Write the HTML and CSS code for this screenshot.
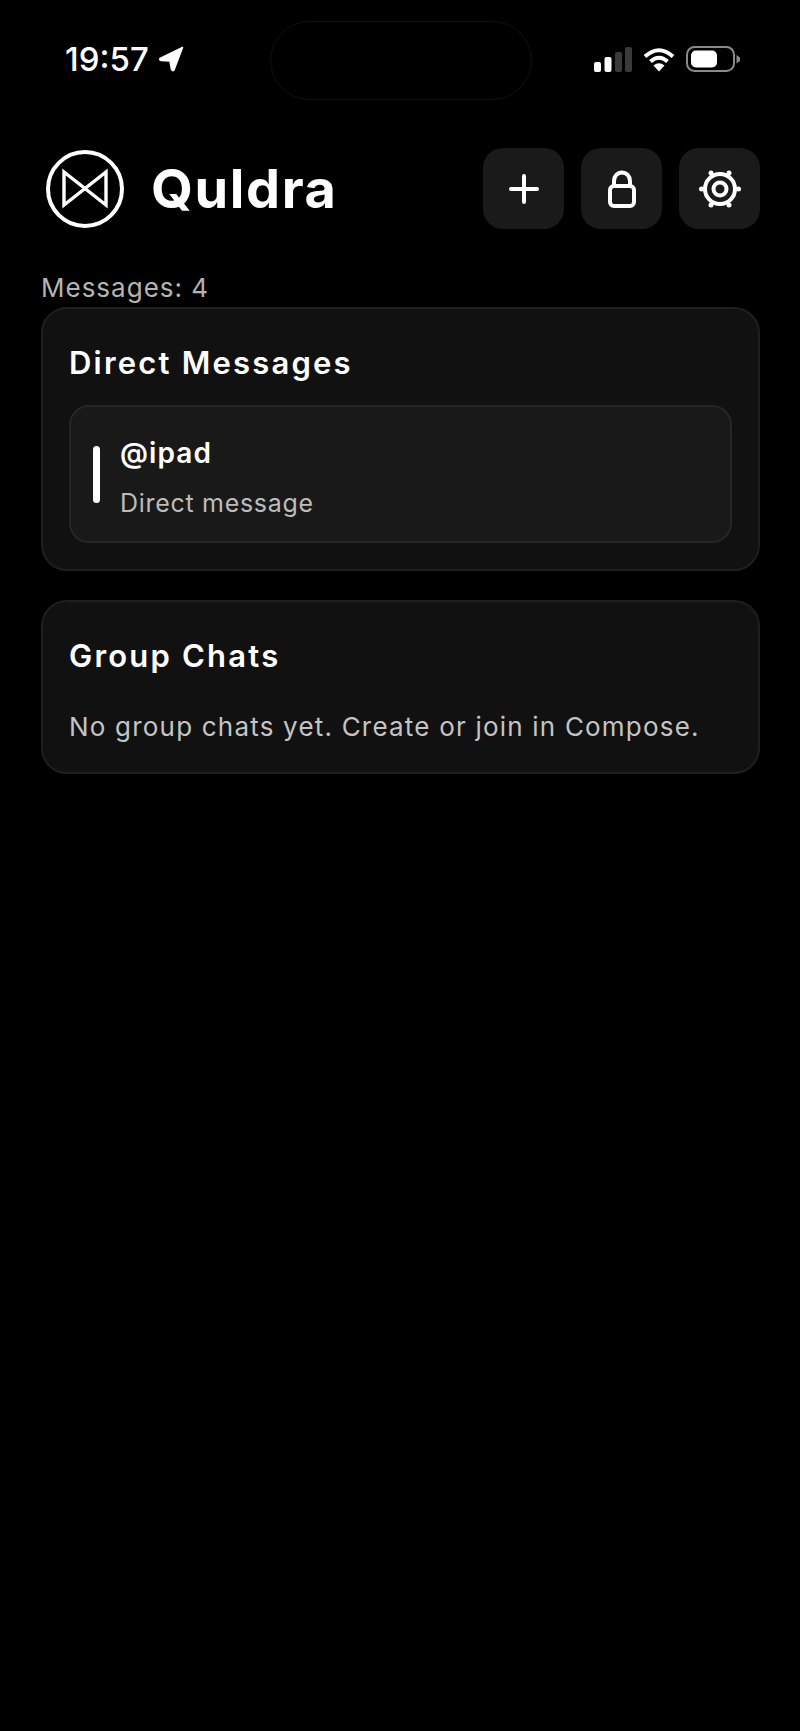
FILE: index.html
```html
<!DOCTYPE html>
<html lang="en">
<head>
    <meta charset="UTF-8">
    <meta name="viewport" content="width=device-width, initial-scale=1.0">
    <title>Quldra</title>
    <link rel="stylesheet" href="styles.css">
</head>
<body>
<div class="island"></div>
<div class="status-bar">
    <div class="status-left">
        <span class="clock">19:57</span>
        <svg class="arrow" width="27" height="26" viewBox="0 0 27 26"><path d="M24.5 1.5 L2 12.5 Q1 14 3 14.4 L12 15 L13.5 23.5 Q14.500 25.500 16 24 Z" fill="#fff" stroke="#fff" stroke-width="1.5" stroke-linejoin="round"/></svg>
    </div>
    <div class="status-right">
        <svg width="38" height="25" viewBox="0 0 38 25">
            <rect x="0" y="15" width="7" height="10" rx="2" fill="#fff"/>
            <rect x="10.500" y="10" width="7" height="15" rx="2" fill="#fff"/>
            <rect x="21" y="5" width="7" height="20" rx="2" fill="#3a3a3a"/>
            <rect x="31" y="0" width="7" height="25" rx="2" fill="#3a3a3a"/>
        </svg>
        <svg width="32" height="25" viewBox="0 0 32 25" fill="none" stroke="#fff" stroke-width="4">
            <path d="M2 9.500 Q16 -3 30 9.500"/>
            <path d="M7.500 14.500 Q16 7 24.500 14.500"/>
            <path d="M16 24.500 L10.500 18.500 Q16 14 21.500 18.500 Z" fill="#fff" stroke="none"/>
        </svg>
        <svg width="54" height="26" viewBox="0 0 54 26">
            <rect x="1" y="1" width="47" height="24" rx="7.500" fill="none" stroke="#8a8a8a" stroke-width="2"/>
            <rect x="5" y="4.500" width="26" height="17" rx="5" fill="#fff"/>
            <path d="M50.500 9 L54 11.500 V15 L50.500 17.500 Z" fill="#8a8a8a"/>
        </svg>
    </div>
</div>

<header class="app-header">
    <div class="brand">
        <svg class="logo" width="78" height="78" viewBox="0 0 78 78" fill="none" stroke="#fff">
            <circle cx="39" cy="39" r="37" stroke-width="4"/>
            <path d="M18 22 L60 55 V22 L18 55 Z" stroke-width="3.400" stroke-linejoin="miter"/>
        </svg>
        <span class="brand-name">Quldra</span>
    </div>
    <div class="actions">
        <button class="icon-btn">
            <svg width="30" height="30" viewBox="0 0 30 30"><path d="M15 2 V28 M2 15 H28" stroke="#fff" stroke-width="4" stroke-linecap="round"/></svg>
        </button>
        <button class="icon-btn">
            <svg width="30" height="38" viewBox="0 0 30 38" fill="none" stroke="#fff" stroke-width="4"><rect x="3" y="16" width="24" height="20" rx="4"/><path d="M7 16 V11 A8 8.500 0 0 1 23 11 V16"/></svg>
        </button>
        <button class="icon-btn">
            <svg width="42" height="42" viewBox="0 0 42 42" fill="none" stroke="#fff">
                <circle cx="21" cy="21" r="15" stroke-width="4"/>
                <circle cx="21" cy="21" r="6.500" stroke-width="4"/>
                <g fill="#fff" stroke="none">
                    <circle cx="12" cy="5" r="2.500"/>
                    <circle cx="30" cy="5" r="2.500"/>
                    <circle cx="2.500" cy="21" r="2.500"/>
                    <circle cx="39.500" cy="21" r="2.500"/>
                    <circle cx="12" cy="37" r="2.500"/>
                    <circle cx="30" cy="37" r="2.500"/>
                </g>
            </svg>
        </button>
    </div>
</header>

<main class="content">
    <div class="msg-count">Messages: 4</div>
    <section class="card card-dm">
        <h2>Direct Messages</h2>
        <div class="thread">
            <div class="thread-bar"></div>
            <div class="thread-text">
                <div class="thread-name">@ipad</div>
                <div class="thread-sub">Direct message</div>
            </div>
        </div>
    </section>
    <section class="card card-group">
        <h2>Group Chats</h2>
        <p class="empty">No group chats yet. Create or join in Compose.</p>
    </section>
</main>
</body>
</html>
```

FILE: styles.css
```css
* {
    box-sizing: border-box;
}
body {
    font-family: Inter, "Liberation Sans", sans-serif;
    background-color: #000;
    color: #fff;
    margin: 0;
    height: 1731px;
    overflow: hidden;
    position: relative;
}
.island {
    position: absolute;
    left: 270px;
    top: 21px;
    width: 262px;
    height: 79px;
    border: 1px solid #111;
    border-radius: 40px;
}
.status-bar {
    display: flex;
    justify-content: space-between;
    align-items: center;
    height: 118px;
    padding: 0 60px 0 65px;
}
.status-left {
    display: flex;
    align-items: center;
    gap: 9px;
}
.clock {
    font-size: 33px;
    font-weight: 500;
    line-height: 40px;
}
.status-right {
    display: flex;
    align-items: center;
    gap: 11px;
}
.status-right svg, .arrow {
    display: block;
}
.app-header {
    display: flex;
    justify-content: space-between;
    align-items: center;
    padding: 30px 40px 0 46px;
}
.brand {
    display: flex;
    align-items: center;
    gap: 27px;
}
.logo {
    display: block;
}
.brand-name {
    font-size: 54px;
    font-weight: 700;
    line-height: 60px;
    letter-spacing: 1.6px;
}
.actions {
    display: flex;
    gap: 17px;
}
.icon-btn {
    width: 81px;
    height: 81px;
    display: flex;
    align-items: center;
    justify-content: center;
    background-color: #1a1a1a;
    border: none;
    border-radius: 20px;
    padding: 0;
}
.content {
    padding: 0 40px 0 41px;
}
.msg-count {
    margin-top: 43px;
    font-size: 26px;
    line-height: 32px;
    letter-spacing: 1px;
    color: #b4b4b4;
}
.card {
    background-color: #111;
    border: 2px solid #1f1f1f;
    border-radius: 26px;
    padding: 0 26px;
}
.card h2 {
    margin: 0;
    font-size: 31px;
    font-weight: 600;
    line-height: 38px;
    letter-spacing: 2.2px;
}
.card-dm {
    margin-top: 3px;
    height: 264px;
    padding-top: 35px;
}
.card-group {
    margin-top: 29px;
    height: 174px;
    padding-top: 35px;
}
.thread {
    display: flex;
    align-items: center;
    gap: 20px;
    margin-top: 23px;
    height: 138px;
    padding-left: 22px;
    background-color: #191919;
    border: 2px solid #262626;
    border-radius: 20px;
}
.thread-bar {
    width: 7px;
    height: 57px;
    background-color: #fff;
    border-radius: 4px;
}
.thread-name {
    margin-top: 6px;
    font-size: 28px;
    font-weight: 600;
    line-height: 34px;
    letter-spacing: 1.1px;
}
.thread-sub {
    margin-top: 18px;
    font-size: 25px;
    line-height: 30px;
    letter-spacing: 0.7px;
    color: #bcbcbc;
}
.empty {
    margin: 36px 0 0;
    font-size: 26px;
    line-height: 32px;
    letter-spacing: 1.2px;
    color: #c4c4c4;
}
```
